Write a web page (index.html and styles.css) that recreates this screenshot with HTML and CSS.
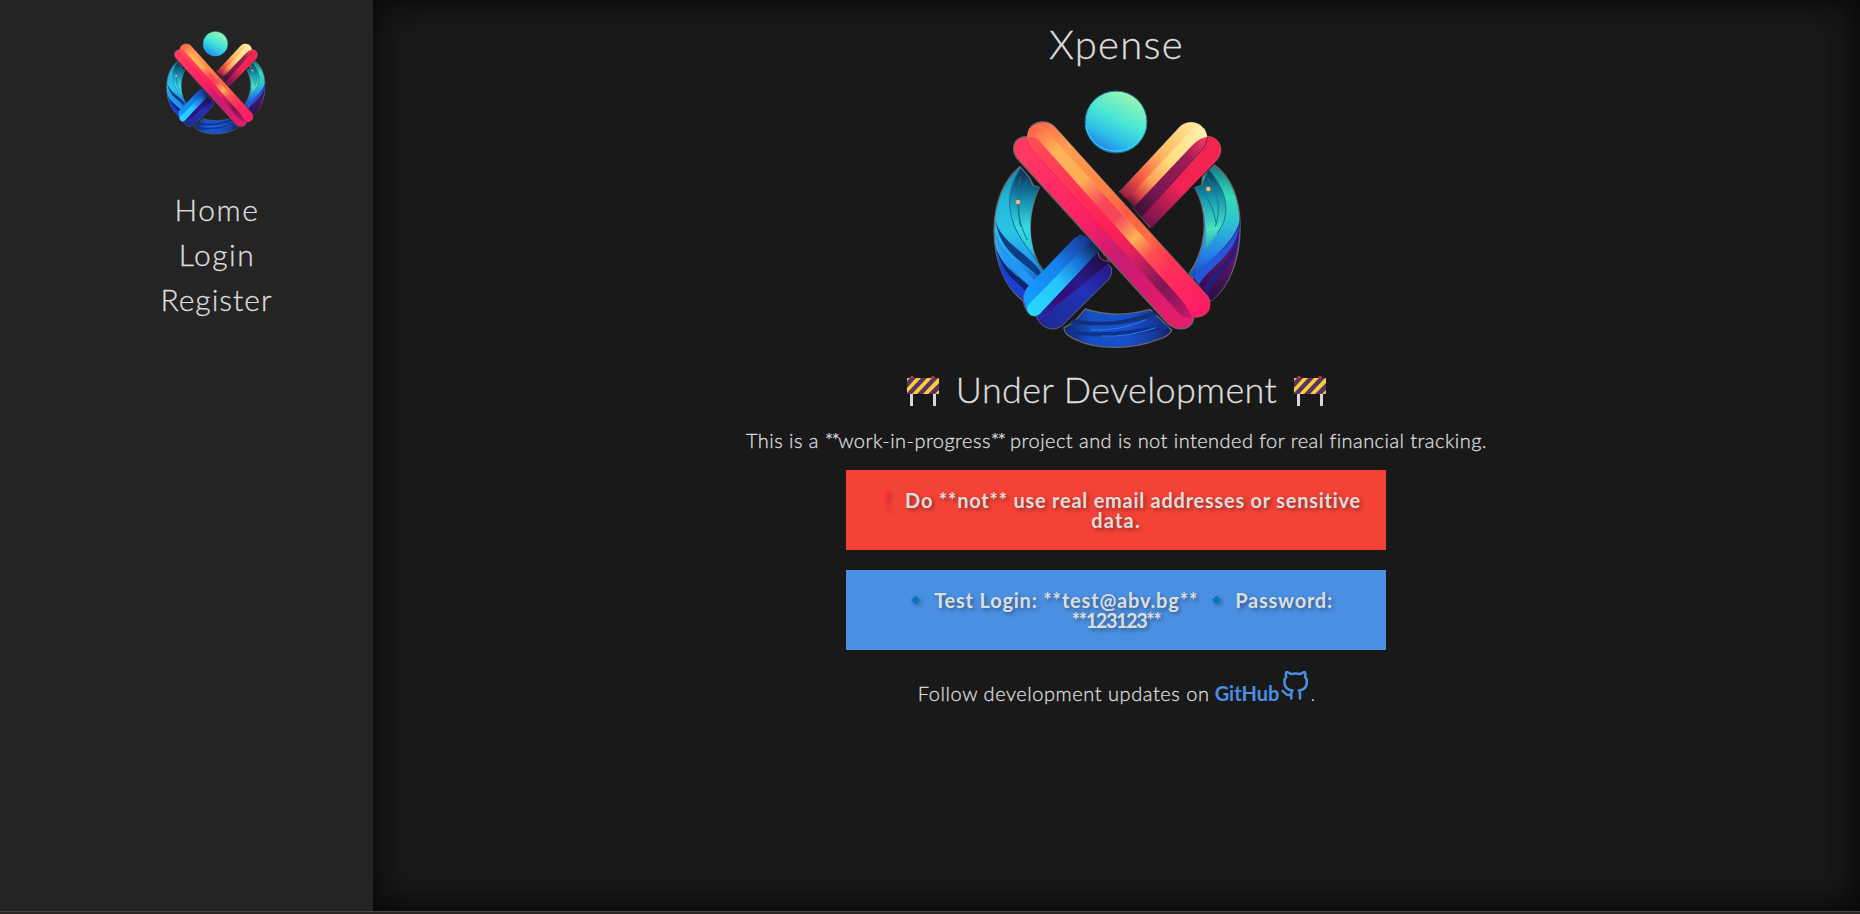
FILE: index.html
```html
<!DOCTYPE html>
<html lang="en">
<head>
<meta charset="utf-8">
<title>Xpense</title>
<link rel="stylesheet" href="styles.css">
</head>
<body>
<svg class="defs" width="0" height="0" aria-hidden="true">
  <defs>
    <linearGradient id="ball" x1=".8" y1="0.05" x2=".3" y2="1"><stop offset="0" stop-color="#a2f5ae"/><stop offset=".45" stop-color="#48e8d4"/><stop offset=".75" stop-color="#2cbce8"/><stop offset="1" stop-color="#2277ec"/></linearGradient>
    <linearGradient id="crest" gradientUnits="userSpaceOnUse" x1="150" y1="145" x2="660" y2="690"><stop offset="0" stop-color="#ff6048"/><stop offset=".14" stop-color="#ffb457"/><stop offset=".3" stop-color="#ffad55"/><stop offset=".42" stop-color="#fb4559"/><stop offset=".5" stop-color="#f64559"/><stop offset=".61" stop-color="#ffb257"/><stop offset=".7" stop-color="#fc5053"/><stop offset=".8" stop-color="#ff2e5c"/><stop offset="1" stop-color="#ff1c68"/></linearGradient>
    <linearGradient id="upper" gradientUnits="userSpaceOnUse" x1="180" y1="130" x2="670" y2="650"><stop offset="0" stop-color="#ff6a4c"/><stop offset=".15" stop-color="#ffa050"/><stop offset=".4" stop-color="#ff8045"/><stop offset=".52" stop-color="#fd5c41"/><stop offset=".65" stop-color="#ff7143"/><stop offset=".78" stop-color="#ff3551"/><stop offset="1" stop-color="#fa1f63"/></linearGradient>
    <linearGradient id="middle" gradientUnits="userSpaceOnUse" x1="150" y1="180" x2="630" y2="720"><stop offset="0" stop-color="#ff4d58"/><stop offset=".5" stop-color="#ff1f56"/><stop offset=".63" stop-color="#e4215f"/><stop offset=".82" stop-color="#7c1656"/><stop offset="1" stop-color="#c21a69"/></linearGradient>
    <linearGradient id="lower" gradientUnits="userSpaceOnUse" x1="110" y1="200" x2="610" y2="730"><stop offset="0" stop-color="#ff3b62"/><stop offset=".4" stop-color="#ff1f65"/><stop offset=".62" stop-color="#c71b72"/><stop offset="1" stop-color="#e71c6b"/></linearGradient>
    <linearGradient id="armTop" gradientUnits="userSpaceOnUse" x1="640" y1="130" x2="430" y2="345"><stop offset="0" stop-color="#ffe794"/><stop offset=".45" stop-color="#ffb760"/><stop offset=".75" stop-color="#fb5b43"/><stop offset="1" stop-color="#9b1c3e"/></linearGradient>
    <linearGradient id="armLight" gradientUnits="userSpaceOnUse" x1="670" y1="140" x2="450" y2="375"><stop offset="0" stop-color="#ffefb0"/><stop offset=".45" stop-color="#ffdc7f"/><stop offset=".7" stop-color="#ffa254"/><stop offset=".88" stop-color="#d63a42"/><stop offset="1" stop-color="#4b1538"/></linearGradient>
    <linearGradient id="armDark" gradientUnits="userSpaceOnUse" x1="680" y1="180" x2="470" y2="400"><stop offset="0" stop-color="#f43a5d"/><stop offset=".25" stop-color="#a01c55"/><stop offset=".7" stop-color="#7a1752"/><stop offset="1" stop-color="#351032"/></linearGradient>
    <linearGradient id="armRed" gradientUnits="userSpaceOnUse" x1="710" y1="190" x2="505" y2="430"><stop offset="0" stop-color="#f5234f"/><stop offset=".55" stop-color="#ee2455"/><stop offset="1" stop-color="#75134b"/></linearGradient>
    <linearGradient id="legA" gradientUnits="userSpaceOnUse" x1="140" y1="650" x2="330" y2="470"><stop offset="0" stop-color="#159cff"/><stop offset=".5" stop-color="#1682ed"/><stop offset="1" stop-color="#17308e"/></linearGradient>
    <linearGradient id="legB" gradientUnits="userSpaceOnUse" x1="150" y1="700" x2="350" y2="500"><stop offset="0" stop-color="#28d7ff"/><stop offset=".45" stop-color="#26c4fb"/><stop offset=".75" stop-color="#1673d8"/><stop offset="1" stop-color="#102353"/></linearGradient>
    <linearGradient id="legC" gradientUnits="userSpaceOnUse" x1="190" y1="720" x2="370" y2="530"><stop offset="0" stop-color="#252caa"/><stop offset=".3" stop-color="#320d72"/><stop offset=".6" stop-color="#281b8b"/><stop offset="1" stop-color="#220b43"/></linearGradient>
    <linearGradient id="legD" gradientUnits="userSpaceOnUse" x1="210" y1="740" x2="390" y2="560"><stop offset="0" stop-color="#1d2a98"/><stop offset=".6" stop-color="#2032b6"/><stop offset="1" stop-color="#28148b"/></linearGradient>
    <linearGradient id="ringL" gradientUnits="userSpaceOnUse" x1="110" y1="260" x2="120" y2="650"><stop offset="0" stop-color="#1583ad"/><stop offset=".25" stop-color="#22b8dc"/><stop offset=".5" stop-color="#2bc4e6"/><stop offset=".75" stop-color="#2196ec"/><stop offset="1" stop-color="#1733a4"/></linearGradient>
    <linearGradient id="ringLi" gradientUnits="userSpaceOnUse" x1="160" y1="290" x2="130" y2="570"><stop offset="0" stop-color="#0b3c5b"/><stop offset=".25" stop-color="#178cb0"/><stop offset=".55" stop-color="#35dcdf"/><stop offset=".75" stop-color="#2fc8dc"/><stop offset="1" stop-color="#14599b"/></linearGradient>
    <linearGradient id="ringR" gradientUnits="userSpaceOnUse" x1="720" y1="260" x2="690" y2="600"><stop offset="0" stop-color="#167b84"/><stop offset=".25" stop-color="#35ddb9"/><stop offset=".5" stop-color="#2dbfd3"/><stop offset=".8" stop-color="#237cea"/><stop offset="1" stop-color="#1b46ad"/></linearGradient>
    <linearGradient id="ringRi" gradientUnits="userSpaceOnUse" x1="670" y1="280" x2="690" y2="540"><stop offset="0" stop-color="#0b4060"/><stop offset=".3" stop-color="#1899ae"/><stop offset=".65" stop-color="#49e4c3"/><stop offset="1" stop-color="#1b75a2"/></linearGradient>
    <linearGradient id="deepR" gradientUnits="userSpaceOnUse" x1="770" y1="430" x2="700" y2="660"><stop offset="0" stop-color="#24209b"/><stop offset=".5" stop-color="#5b155c"/><stop offset="1" stop-color="#2b0d48"/></linearGradient>
    <linearGradient id="base" x1="0" y1="0" x2="1" y2="0"><stop offset="0" stop-color="#102565"/><stop offset=".25" stop-color="#1450c8"/><stop offset=".6" stop-color="#174fcb"/><stop offset=".85" stop-color="#153a9b"/><stop offset="1" stop-color="#151e68"/></linearGradient>
    <symbol id="mark" viewBox="0 0 840 840">
      <g stroke="#65656a" stroke-width="4" stroke-linejoin="round">
        <path fill="url(#ringL)" d="M120 260C70 300 42 370 42 455C44 550 78 625 130 663L192 575C148 520 133 420 178 322L160 316L148 292L132 274Z"/>
        <path fill="url(#ringR)" d="M704 255C756 292 779 360 780 430C782 535 750 620 692 663L628 580C675 510 691 410 645 323L665 315L668 290Z"/>
        <path fill="url(#base)" d="M252 743L280 728L316 687C380 708 450 705 510 688L575 750C570 763 555 773 535 778C455 810 350 810 285 778C260 766 252 757 252 743Z"/>
      </g>
      <path fill="url(#ringLi)" d="M121 264C88 315 83 365 98 420C112 480 163 524 190 575C149 515 133 420 178 322L158 317L145 292Z"/>
      <path fill="none" stroke="#117199" stroke-width="3" d="M121 266C86 320 82 368 97 420C112 476 160 520 188 572M122 290C106 350 110 420 142 480M140 300C114 350 112 400 122 440"/>
      <path fill="#0d3d84" d="M45 418C63 493 153 523 183 578L174 589C136 547 61 523 45 418Z"/>
      <path fill="#2396f4" d="M43 445C66 530 129 555 166 604L153 624C117 583 59 551 43 445Z"/>
      <path fill="#10236d" d="M47 500C68 568 122 592 153 624L145 641C113 608 65 588 47 500Z"/>
      <path fill="#1a40d2" d="M49 513C66 588 115 602 143 642L130 661C91 631 59 590 49 513Z"/>
      <path fill="url(#ringRi)" d="M686 268C744 340 758 405 710 463Q684 493 672 526C685 452 682 385 645 323L666 315Z"/>
      <path fill="none" stroke="#137a92" stroke-width="3" d="M687 268C742 335 756 405 711 460M683 295C718 340 722 395 706 440M655 322C690 355 702 395 708 430"/>
      <path fill="url(#deepR)" d="M780 420C759 499 694 526 638 602L693 663C751 618 778 535 780 420Z"/>
      <path fill="#2357dc" d="M778 438C744 517 687 527 642 592L656 614C694 554 763 532 778 438Z"/>
      <path fill="#2a1b78" d="M776 475C753 555 703 559 669 624L683 640C713 583 763 560 776 475Z"/>
      <path fill="#12307c" d="M281 716C364 735 450 723 520 693L531 704C458 735 360 744 267 729Z"/>
      <path fill="#10328f" d="M256 747C350 767 455 753 555 731L567 743C470 765 360 782 264 758Z"/>
      <path fill="none" stroke="#2f7de0" stroke-width="3" d="M333 750Q420 754 499 719M364 768Q440 773 527 743"/>
      <path fill="url(#armTop)" stroke="#65656a" stroke-width="3" d="M418 336L601 139C624 119 661 126 675 151L460 383L510 443L708 242C734 216 724 173 683 169L640 160L440 330Z"/>
      <path fill="url(#armTop)" d="M418 336L601 139C624 119 653 126 665 139L440 358Z"/>
      <path fill="url(#armLight)" d="M440 358L640 145Q660 131 675 150Q685 168 680 183L466 389Z"/>
      <path fill="url(#armDark)" d="M460 383L637 196Q658 174 679 171Q682 192 662 213L487 414Z"/>
      <path fill="url(#armRed)" d="M485 413L663 213Q681 191 681 169C724 172 733 216 708 243L515 443Z"/>
      <path fill="none" stroke="#781543" stroke-width="3" d="M489 407L662 214Q681 195 681 171"/>
      <path fill="url(#legD)" stroke="#65656a" stroke-width="3" d="M170 709C177 739 218 761 247 736L386 598Q397 585 394 564L350 515L300 465L145 622C116 651 132 708 170 709Z"/>
      <path fill="url(#legA)" d="M315 467C288 462 282 477 264 494L146 617C118 649 137 692 153 705L340 490Z"/>
      <path fill="url(#legB)" d="M334 482L145 674Q135 693 151 705Q169 714 186 696L359 511Z"/>
      <path fill="url(#legC)" d="M359 511L187 694Q171 711 177 724Q200 710 207 694L391 547Z"/>
      <path fill="none" stroke="#45138c" stroke-width="3" d="M177 725Q205 714 215 686L388 550"/>
      <path fill="url(#lower)" stroke="#65656a" stroke-width="4" d="M142 169C102 170 90 206 111 235L558 725C582 753 621 754 638 727L642 711C681 714 699 680 683 649L225 142C205 119 163 119 147 149Z"/>
      <path fill="url(#upper)" d="M147 155C161 123 206 119 225 142L683 649C697 675 690 697 672 705Z"/>
      <path fill="url(#crest)" d="M142 164Q146 135 172 135Q187 137 202 155L644 640Q672 668 676 700Q656 718 633 709L176 181Q157 162 142 177Z"/>
      <path fill="url(#middle)" d="M142 178Q158 163 176 181L600 655Q628 690 636 712Q617 720 600 704L160 216Q143 199 142 178Z"/>
      <path fill="none" stroke="#dc195c" stroke-width="2" d="M142 187Q147 205 166 220L596 700Q611 717 635 708"/>
      <path fill="none" stroke="#ff9c5c" stroke-width="2" opacity=".7" d="M160 140Q185 133 202 155L460 438"/>
      <circle cx="408" cy="126" r="93" fill="url(#ball)" stroke="#176a86" stroke-width="3"/>
      <path d="M317 136A92 92 0 0 0 498 140" fill="none" stroke="#37dcff" stroke-width="3"/>
      <circle cx="114" cy="366" r="7" fill="#ffb66c"/><circle cx="685" cy="327" r="7" fill="#ffb66c"/>
      <path d="M354 517Q357 538 373 542L388 544Q381 529 369 522" fill="#1b191d" stroke="#65656a" stroke-width="3"/>
    </symbol>
    <symbol id="barrier" viewBox="0 0 34 32">
      <path d="M4 19h3v12H4zM27 19h3v12h-3z" fill="#d8d8d8"/>
      <path d="M4 3q0-2 2-2t2 2zM25 3q0-2 2-2t2 2z" fill="#ed2b2b"/>
      <path d="M1 4q0-1 1-1h30q1 0 1 1v14q0 1-1 1H2q-1 0-1-1z" fill="#ffcf35"/>
      <path d="M4 3h6L1 13V6zM15 3h6L6 19H1v-1zM26 3h6L17 19h-6zM33 8v7l-4 4h-7z" fill="#563566"/>
    </symbol>
  </defs>
</svg>
<div class="app">
  <aside class="sidebar">
    <svg class="logo-small"><use href="#mark"/></svg>
    <nav class="menu">
      <a class="home">Home</a>
      <a class="login">Login</a>
      <a class="register">Register</a>
    </nav>
  </aside>
  <main class="content">
    <h1 class="title">Xpense</h1>
    <svg class="logo-large"><use href="#mark"/></svg>
    <h2 class="status"><svg class="barrier"><use href="#barrier"/></svg><span class="status-text">Under Development</span><svg class="barrier"><use href="#barrier"/></svg></h2>
    <p class="intro">This is a <span class="stars">**</span>work-in-progress<span class="stars">**</span> project and is not intended for real financial tracking.</p>
    <div class="box warning">
      <div class="line warn-line"><svg class="bang" viewBox="0 0 4 20"><path d="M0 0h4l-1 14H1z"/><circle cx="2" cy="18" r="1.8"/></svg><span class="warn-text">Do **not** use real email addresses or sensitive</span></div>
      <div class="line"><span class="data-text">data.</span></div>
    </div>
    <div class="box info">
      <div class="line test-line"><svg class="diamond" viewBox="0 0 10 10"><path d="M5 0l5 5-5 5-5-5z"/></svg><span class="test-text">Test Login: **test@abv.bg**</span><svg class="diamond" viewBox="0 0 10 10"><path d="M5 0l5 5-5 5-5-5z"/></svg><span class="pass-text">Password:</span></div>
      <div class="line"><span class="num-text">**123123**</span></div>
    </div>
    <p class="follow"><span class="follow-text">Follow development updates on</span><a class="github">GitHub</a><svg class="octo" viewBox="0 0 24 24"><path d="M9 19c-5 1.5-5-2.5-7-3m14 6v-3.87a3.37 3.37 0 0 0-.94-2.61c3.14-.35 6.44-1.54 6.44-7A5.44 5.44 0 0 0 20 4.77 5.07 5.07 0 0 0 19.91 1S18.73.65 16 2.48a13.38 13.38 0 0 0-7 0C6.27.65 5.09 1 5.09 1A5.07 5.07 0 0 0 5 4.77a5.44 5.44 0 0 0-1.5 3.78c0 5.42 3.3 6.61 6.44 7A3.37 3.37 0 0 0 9 18.13V22"/></svg><span>.</span></p>
  </main>
</div>
<div class="bottom-edge"></div>
</body>
</html>
```

FILE: styles.css
```css
* { box-sizing: border-box; }
body { margin: 0; height: 914px; overflow: hidden; display: flex; flex-direction: column; background: #191919; color: #ddd; font-family: Lato, sans-serif; font-weight: 300; }
.defs { position: absolute; }
.app { display: flex; height: 911px; }
.sidebar { width: 373px; background: #242424; padding: 27px 0 0 60px; display: flex; flex-direction: column; align-items: center; }
.logo-small { width: 112px; height: 112px; margin-left: 1px; }
.menu { margin-top: 48px; display: flex; flex-direction: column; align-items: center; font-size: 30px; line-height: 45px; -webkit-text-stroke: .3px #ddd; }
.home { letter-spacing: 1.6px; margin-right: -1px; }
.login { letter-spacing: 1.5px; margin-right: -1px; }
.register { letter-spacing: 1px; }
.content { flex: 1; display: flex; flex-direction: column; align-items: center; box-shadow: inset 0 0 42px rgba(0,0,0,.65), inset -6px -5px 26px rgba(0,0,0,.3); white-space: nowrap; }
.title { margin: 24px 0 0; font-size: 40px; line-height: 40px; font-weight: 300; letter-spacing: 1.3px; -webkit-text-stroke: .3px #ddd; }
.logo-large { width: 280px; height: 280px; margin-top: 16px; margin-left: 7px; }
.status { margin: 11px 0 0; display: flex; align-items: center; justify-content: center; gap: 16px; font-size: 36px; line-height: 36px; font-weight: 300; }
.status-text { letter-spacing: .35px; -webkit-text-stroke: .3px #ddd; }
.barrier { width: 34px; height: 32px; position: relative; top: 2px; }
.intro { margin: 23px 0 0; font-size: 20px; line-height: 20px; letter-spacing: .45px; -webkit-text-stroke: .3px #ddd; }
.stars { letter-spacing: -1.8px; }
.box { width: 540px; height: 80px; margin: 20px 1px 0 0; padding-top: 20px; font-size: 20px; line-height: 20px; font-weight: 700; text-shadow: 2px 2px 4px rgba(0,0,0,.4); }
.line { display: flex; justify-content: center; align-items: center; height: 20px; }
.warn-line { padding-left: 14px; }
.warning { background: #f44336; }
.info { background: #4a90e2; }
.bang { width: 4px; height: 20px; fill: #ff2d35; margin-right: 16px; filter: drop-shadow(2px 2px 2px rgba(0,0,0,.25)); }
.warn-text { letter-spacing: .74px; }
.data-text { letter-spacing: 1.2px; }
.test-line { padding-right: 2px; }
.test-text { letter-spacing: .8px; }
.pass-text { letter-spacing: .75px; }
.num-text { letter-spacing: -1.5px; }
.diamond { width: 9px; height: 10px; fill: #0575bd; filter: drop-shadow(2px 2px 2px rgba(0,0,0,.3)); margin: 0 14px; }
.follow { margin: 16px 0 0; height: 40px; display: flex; font-size: 20px; line-height: 20px; padding-top: 17px; }
.follow-text { letter-spacing: .56px; -webkit-text-stroke: .3px #ddd; }
.github { margin-left: 5px; color: #4a90e2; font-weight: 700; }
.octo { width: 30px; height: 30px; margin: -12px 0 0 1px; fill: none; stroke: #4a90e2; stroke-width: 2; stroke-linecap: round; stroke-linejoin: round; }
.bottom-edge { height: 3px; background: #2b2825; border-top: 1px solid #4a4846; }
```
